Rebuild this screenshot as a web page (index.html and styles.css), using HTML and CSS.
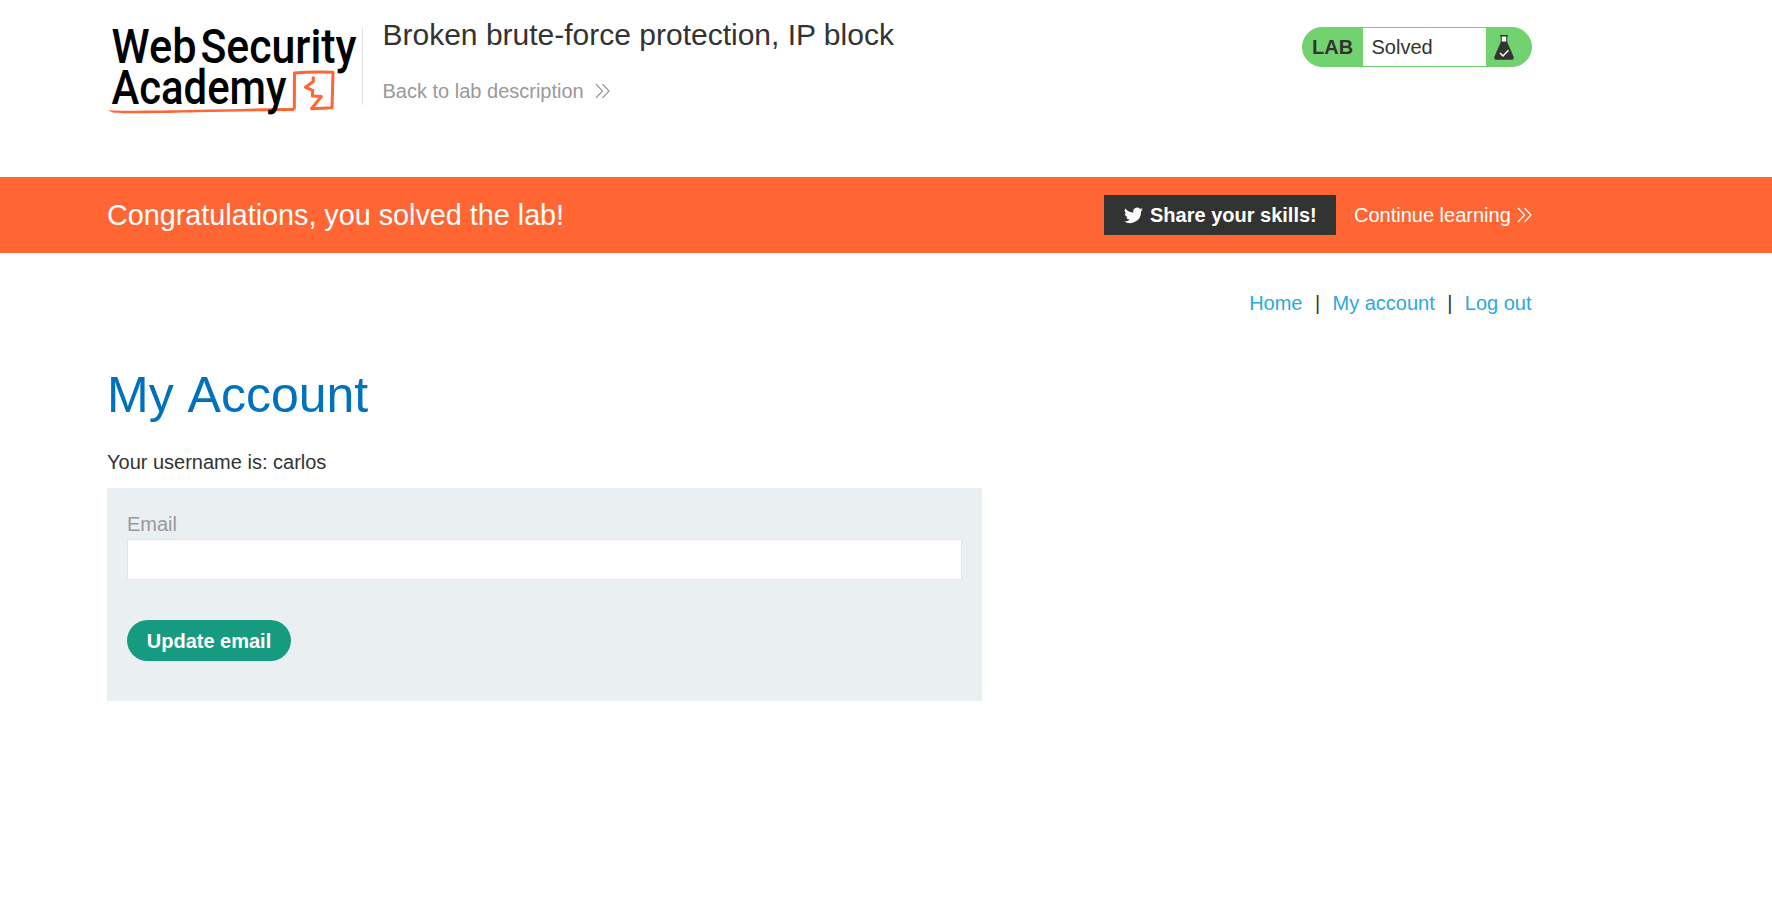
FILE: index.html
```html
<!DOCTYPE html>
<html lang="en">
<head>
<meta charset="utf-8">
<title>Broken brute-force protection, IP block</title>
<link rel="stylesheet" href="styles.css">
</head>
<body>
<header class="lab-header container">
  <svg class="logo" viewBox="0 0 256 92" role="img" aria-label="Web Security Academy">
    <path class="logo-wedge" d="M0.500 83.200C25 84.200 60 83.600 100 82.600C130 82 160 80.800 187 80.900V84C150 84.200 120 84.600 90 85.300C60 86 20 87 6 85.400Z"/>
    <path class="logo-line" d="M187.300 82.500L187.500 46Q206 44.200 226 45.300L225 80.800L204.500 81.800L214.300 69.500L205.300 69L205.800 63.300L198.500 60.300L206.300 54.500L206.300 49.500"/>
    <g class="logo-text">
      <text x="4.500" y="36" textLength="85" lengthAdjust="spacingAndGlyphs">Web</text>
      <text x="93.500" y="36" textLength="156" lengthAdjust="spacingAndGlyphs">Security</text>
      <text x="4.500" y="76.700" textLength="175" lengthAdjust="spacingAndGlyphs">Academy</text>
    </g>
  </svg>
  <div class="title">
    <h2>Broken brute-force protection, IP block</h2>
    <a class="back" href="#">Back to lab description
      <svg class="chevrons" viewBox="0 0 15 16"><path d="M1 1l6.500 7L1 15M7.500 1L14 8l-6.500 7"/></svg>
    </a>
  </div>
  <div class="status">
    <span class="status-label">LAB</span>
    <p>Solved</p>
    <svg class="flask" viewBox="0 0 20 25">
      <path fill="#fff" d="M7 1h6v6H7z"/>
      <path d="M6 0h8v1.400h-.8V7l6.300 14.600q1 3.200-1.700 3.200H2.200Q-.5 24.800.5 21.600L6.800 7V1.400H6zM7.800 1.400V6.500h4.400V1.400z" fill="#333332" fill-rule="evenodd"/>
      <path d="M6 18l3 3 5.500-5.800" fill="none" stroke="#fff" stroke-width="1.500"/>
    </svg>
  </div>
</header>
<section class="banner">
  <div class="banner-inner container">
    <h4>Congratulations, you solved the lab!</h4>
    <a class="share" href="#">
      <svg class="bird" viewBox="0 0 24 20"><path d="M24 2.400a10 10 0 0 1-2.800.8A5 5 0 0 0 23.300.500a10 10 0 0 1-3.100 1.200 4.900 4.900 0 0 0-8.400 4.500A14 14 0 0 1 1.700 1a4.900 4.900 0 0 0 1.500 6.600A5 5 0 0 1 1 7v.1a4.900 4.900 0 0 0 3.900 4.800 5 5 0 0 1-2.200.1 4.900 4.900 0 0 0 4.600 3.400A9.900 9.900 0 0 1 0 17.400 14 14 0 0 0 21.500 5 10 10 0 0 0 24 2.400z"/></svg>
      Share your skills!
    </a>
    <a class="continue" href="#">Continue learning
      <svg class="chevrons" viewBox="0 0 15 16"><path d="M1 1l6.500 7L1 15M7.500 1L14 8l-6.500 7"/></svg>
    </a>
  </div>
</section>
<main class="container">
  <nav><a href="#">Home</a><span>|</span><a href="#">My account</a><span>|</span><a href="#">Log out</a></nav>
  <h1>My Account</h1>
  <p class="username">Your username is: carlos</p>
  <form class="login-form">
    <label for="email">Email</label>
    <input id="email" type="email">
    <button type="button">Update email</button>
  </form>
</main>
</body>
</html>
```
FILE: styles.css
```css
* { box-sizing: border-box; }
body {
  margin: 0;
  background: #fff;
  color: #333332;
  font: 20px/24px "Liberation Sans", Arial, sans-serif;
}
h1, h2, h4, p { margin: 0; font-weight: 400; }
a { text-decoration: none; }
.container { width: 1425px; margin-left: 107px; }

.lab-header { display: flex; align-items: flex-start; height: 177px; padding-top: 27px; }
.logo { width: 256px; height: 92px; flex: none; overflow: visible; }
.logo-text { font-family: Roboto, sans-serif; font-size: 48px; font-weight: 500; fill: #000; }
.logo-wedge { fill: #ff6633; }
.logo-line { fill: none; stroke: #ff6633; stroke-width: 3; stroke-linejoin: round; }
.title { flex: 1; height: 78px; margin-left: -1px; padding-left: 19.500px; border-left: 1px solid #e3e3e3; }
.title h2 { margin-top: -10px; font-size: 30px; line-height: 36px; white-space: nowrap; }
.back { display: flex; align-items: center; gap: 11px; margin-top: 26px; color: #999; }
.chevrons { width: 15px; height: 16px; flex: none; fill: none; stroke: currentColor; stroke-width: 1.200; }

.status {
  display: flex;
  align-items: center;
  width: 230px;
  height: 40px;
  border: 1px solid #72d26f;
  border-radius: 20px;
  background: #72d26f;
}
.status-label { width: 60px; padding-left: 9px; font-weight: 700; }
.status p { width: 123px; height: 38px; padding-left: 8.500px; background: #fff; line-height: 38px; }
.flask { width: 20px; height: 25px; margin-left: 8px; }

.banner { background: #ff6633; color: #fff; }
.banner-inner { display: flex; align-items: center; height: 76px; }
.banner h4 { flex: 1; font-size: 28.750px; line-height: 34px; white-space: nowrap; }
.share {
  display: flex;
  align-items: center;
  gap: 7px;
  width: 232px;
  height: 40px;
  padding-left: 20px;
  background: #333332;
  color: #fff;
  font-weight: 700;
  white-space: nowrap;
}
.bird { width: 19px; height: 17px; flex: none; fill: #fff; }
.continue { display: flex; align-items: center; justify-content: space-between; width: 178px; margin-left: 18px; color: #fff; white-space: nowrap; }

nav { display: flex; justify-content: flex-end; padding: 38px 0.500px 0 0; }
nav a { color: #29a9e1; }
nav span { width: 30px; text-align: center; }
h1 { margin-top: 50px; color: #0071bd; font-size: 50px; line-height: 60px; font-kerning: none; }
.username { margin-top: 25px; }
.login-form { width: 875px; height: 213px; margin-top: 14px; padding: 24px 20px 0; background: #eaeff2; }
.login-form label { display: block; color: #999; }
.login-form input { display: block; width: 100%; height: 41px; margin-top: 3px; border: 1px solid #e3e5e6; background: #fff; }
.login-form button {
  display: block;
  width: 164px;
  height: 41px;
  margin-top: 40px;
  padding: 0;
  border: 0;
  border-radius: 21px;
  background: #179b80;
  color: #fff;
  font: 700 20px/24px "Liberation Sans", Arial, sans-serif;
}
```
